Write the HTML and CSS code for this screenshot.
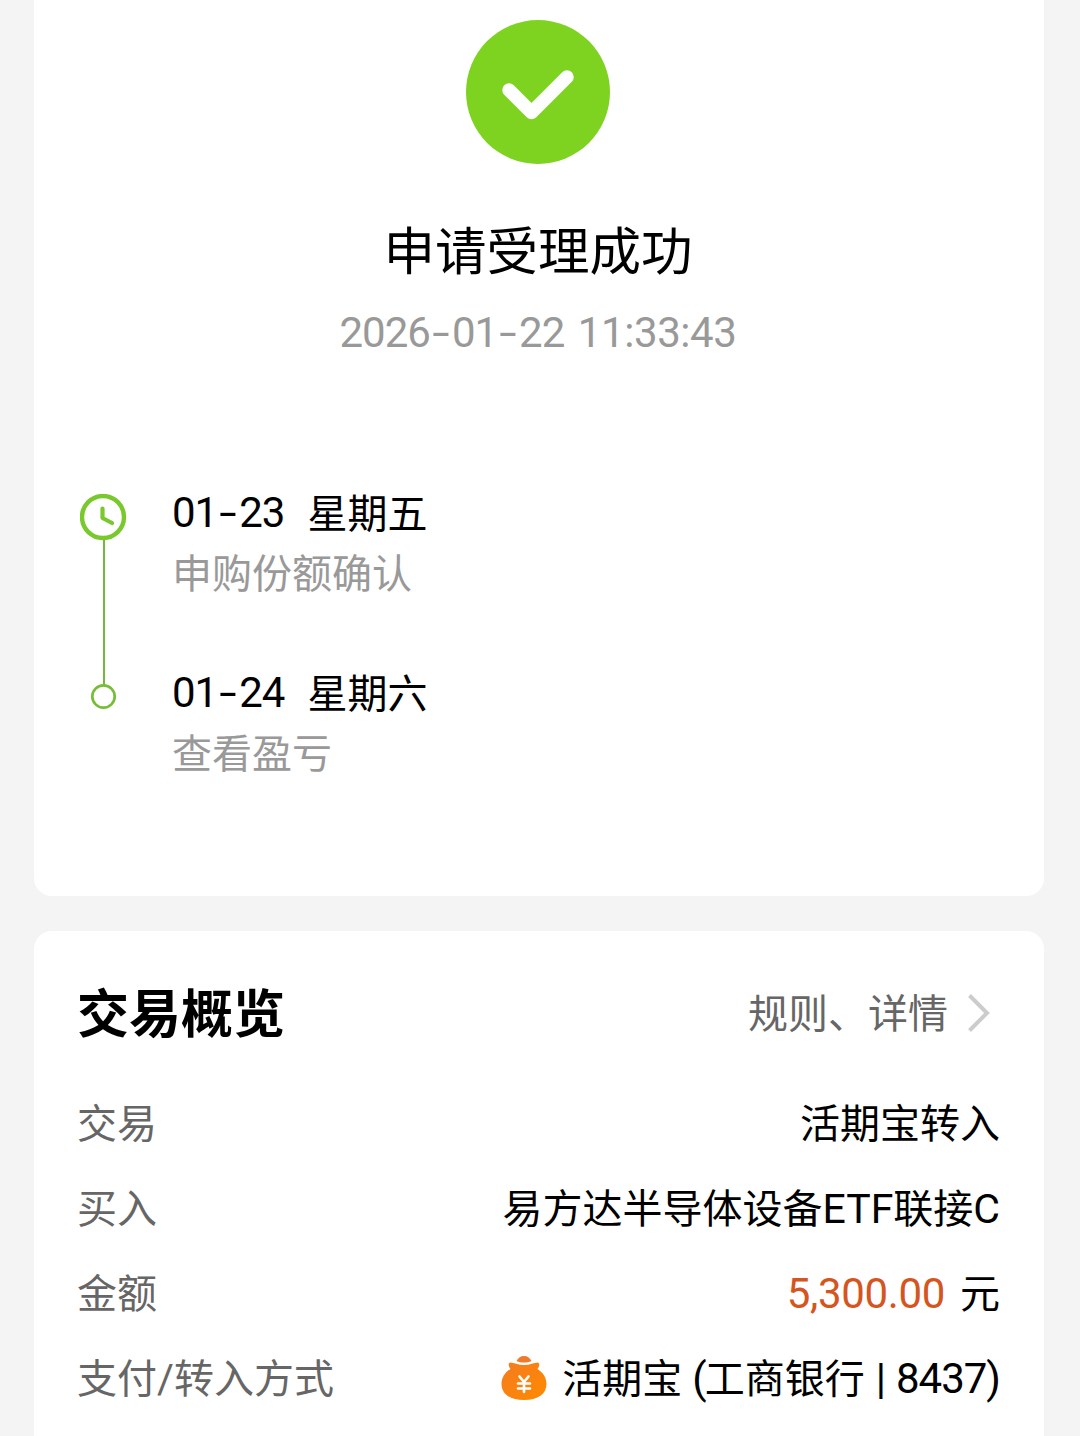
FILE: index.html
```html
<!DOCTYPE html>
<html lang="zh-CN">
<head>
<meta charset="utf-8">
<title>申请受理成功</title>
<link rel="stylesheet" href="styles.css">
</head>
<body>
<main class="page">
  <section class="card result">
    <svg class="result-icon" viewBox="0 0 144 144" aria-hidden="true">
      <circle cx="72" cy="72" r="72" fill="#7ed321"/>
      <path d="M43 70 65.500 92.500 101 57" fill="none" stroke="#fff" stroke-width="13.500" stroke-linecap="round" stroke-linejoin="round"/>
    </svg>
    <h1 class="result-title">申请受理成功</h1>
    <p class="result-time num">2026<span class="dash">-</span>01<span class="dash">-</span>22 <span class="clock">11:33:43</span></p>
    <div class="timeline">
      <svg class="track" viewBox="0 0 48 218" fill="none" aria-hidden="true">
        <path d="M24 46V191" stroke="#75b83c" stroke-width="2"/>
        <circle cx="23" cy="23" r="21" stroke="#7ac92c" stroke-width="4.400"/>
        <path d="M22.500 14.500v9.500l9.500 5" stroke="#7ac92c" stroke-width="4.200" stroke-linecap="round" stroke-linejoin="round"/>
        <circle cx="23.500" cy="202.500" r="11.200" stroke="#78bd38" stroke-width="2.700"/>
      </svg>
      <ol class="steps">
        <li class="step">
          <p class="step-date"><span class="num">01<span class="dash">-</span>23</span><span>星期五</span></p>
          <p class="step-note">申购份额确认</p>
        </li>
        <li class="step">
          <p class="step-date"><span class="num">01<span class="dash">-</span>24</span><span>星期六</span></p>
          <p class="step-note">查看盈亏</p>
        </li>
      </ol>
    </div>
  </section>

  <section class="card overview">
    <header class="overview-head">
      <h2 class="overview-title">交易概览</h2>
      <a class="more"><span>规则、详情</span>
        <svg class="chevron" viewBox="0 0 24 40" aria-hidden="true"><path d="M2.500 2.500 20 20 2.500 37.500" fill="none" stroke="#ccc" stroke-width="4"/></svg>
      </a>
    </header>
    <dl class="rows">
      <div class="row"><dt>交易</dt><dd>活期宝转入</dd></div>
      <div class="row"><dt>买入</dt><dd><span>易方达半导体设备<span class="latin">ETF</span>联接<span class="latin">C</span></span></dd></div>
      <div class="row"><dt>金额</dt><dd><span class="num amount">5,300.00</span><span class="unit">元</span></dd></div>
      <div class="row"><dt>支付<span class="latin">/</span>转入方式</dt><dd>
        <svg class="bag" viewBox="0 0 46 46" aria-hidden="true">
          <defs><linearGradient id="bag-fill" x1="0" y1="0" x2="1" y2="1"><stop offset="0" stop-color="#f47b20"/><stop offset="1" stop-color="#ff8a00"/></linearGradient></defs>
          <path d="M15.500 6C17.500 2.500 19.500 1 23 1s5.500 1.500 7.500 5c-4.500 2-10.500 2-15 0Z" fill="#f07a2a"/>
          <path d="M9 7.500c4 .2 8 2.500 14 2.500s10-2.300 14-2.500c2 1 1.500 4-.5 6.500C42 17.500 45.500 22.500 45.500 29 45.500 39 37 45 23 45S.5 39 .5 29C.5 22.500 4 17.500 9.500 14 7.500 11.500 7 8.500 9 7.500Z" fill="url(#bag-fill)"/>
          <path d="M18.500 21.500 23 27l4.500-5.500M17 28.500h12M17 33.500h12M23 27v10" fill="none" stroke="#fff" stroke-width="2.600" stroke-linecap="round"/>
        </svg>
        <span class="pay">活期宝</span><span class="num paren">(</span><span>工商银行</span><span class="num bar">|</span><span class="num">8437)</span></dd></div>
    </dl>
  </section>
</main>
</body>
</html>
```
FILE: styles.css
```css
* { box-sizing: border-box; }
html, body { margin: 0; background: #f4f4f4; }
body {
  font-family: "Noto Sans CJK SC", sans-serif;
  font-size: 40px;
  color: #000;
}
h1, h2, p, ol, dl, dd { margin: 0; padding: 0; }
ol { list-style: none; }
svg { display: block; flex: none; }

.page {
  display: flex;
  flex-direction: column;
  gap: 35px;
  height: 1436px;
  padding: 0 36px 0 34px;
  overflow: hidden;
}
.card { background: #fff; flex: none; }

.num { font-family: Roboto, sans-serif; font-size: 42px; letter-spacing: -1px; }
.latin {
  font-family: Roboto, "Noto Sans CJK SC", sans-serif;
  font-size: 41px;
  line-height: 1;
}
.dash {
  display: inline-block;
  width: 22px;
  text-align: center;
  letter-spacing: 0;
  transform: scaleX(1.5);
}

.result {
  display: flex;
  flex-direction: column;
  align-items: center;
  height: 896px;
  padding: 20px 46px 0;
  border-radius: 0 0 18px 18px;
}
.result-icon { width: 144px; height: 144px; margin-right: 2px; }
.result-title {
  margin: 48px 2px 0 0;
  font-size: 51.5px;
  font-weight: 400;
  line-height: 72px;
}
.result-time {
  margin: 19px 2px 0 0;
  line-height: 60px;
  color: #999;
  white-space: nowrap;
}
.clock { margin-left: 4px; letter-spacing: -0.4px; }

.timeline {
  display: flex;
  align-self: stretch;
  gap: 44px;
  margin-top: 118px;
}
.track { width: 48px; height: 218px; margin-top: 13px; }
.steps { display: flex; flex-direction: column; gap: 60px; }
.step-date, .step-note { height: 60px; line-height: 60px; white-space: nowrap; }
.step-date { display: flex; gap: 23px; }
.step-date .num { padding-top: 2px; }
.step-note { color: #999; }

.overview {
  height: 540px;
  padding: 42px 44px 0 43px;
  border-radius: 18px 18px 0 0;
}
.overview-head {
  display: flex;
  justify-content: space-between;
  align-items: center;
  height: 80px;
}
.overview-title { padding-bottom: 4px; font-size: 52px; font-weight: 700; line-height: 76px; }
.more { display: flex; align-items: center; gap: 19px; margin-right: 9px; color: #666; }
.more span { padding-bottom: 4px; }
.chevron { width: 24px; height: 40px; }

.rows { margin-top: 26px; }
.row {
  display: flex;
  justify-content: space-between;
  height: 85px;
  line-height: 85px;
  white-space: nowrap;
}
dt { color: #666; }
dd { display: flex; align-items: center; }
dd .num { padding-top: 4px; }
dd .amount { color: #d4561e; letter-spacing: -0.35px; }
.unit { margin-left: 15px; }
.bag { width: 46px; height: 46px; margin-top: 2px; }
.pay { margin-left: 15px; }
.paren { margin: 0 -1px 0 10px; }
.bar { margin: 0 11px; }
```
